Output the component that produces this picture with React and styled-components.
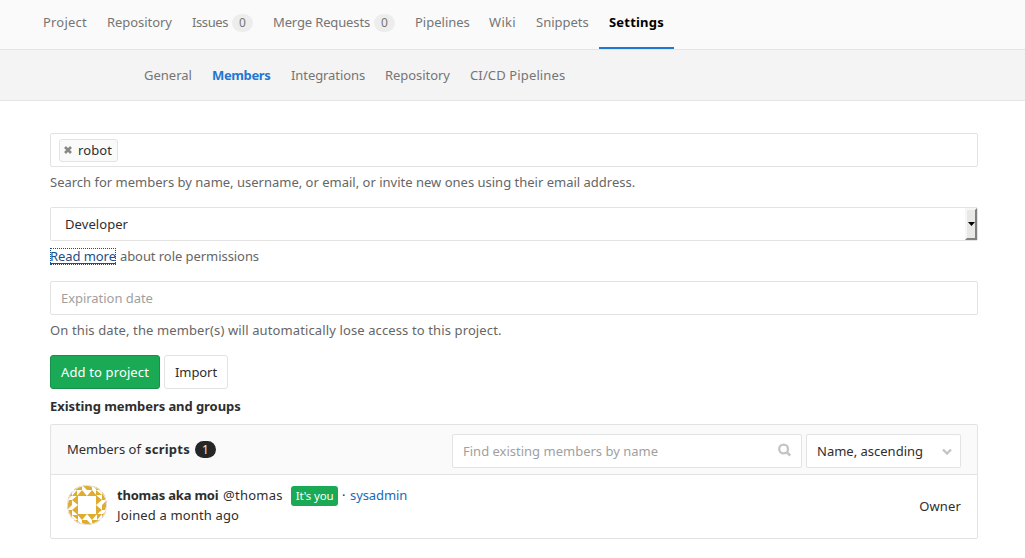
import React from 'react';
import styled, { createGlobalStyle } from 'styled-components';

const Global = createGlobalStyle`
  * { box-sizing: border-box; }
  body {
    margin: 0;
    background: #fff;
    color: #2e2e2e;
    font: 13px/20px "Noto Sans", sans-serif;
  }
`;

const T = styled.span`
  letter-spacing: ${(p) => p.$ls || 0}px;
  font-weight: ${(p) => (p.$bold ? 700 : 400)};
  white-space: nowrap;
`;

const TopNav = styled.nav`
  display: flex;
  height: 50px;
  padding-left: 33px;
  background: #fafafa;
  border-bottom: 1px solid #e5e5e5;
`;

const Tab = styled.a`
  display: flex;
  align-items: flex-start;
  width: ${(p) => p.$w}px;
  height: 49px;
  padding: 12px 0 0 10px;
  color: ${(p) => (p.$active ? '#000' : '#757575')};
  border-bottom: 2px solid ${(p) => (p.$active ? '#1f78d1' : 'transparent')};
`;

const Count = styled.span`
  width: 21px;
  height: 18px;
  margin: 2px 10px 0 auto;
  border-radius: 9px;
  background: #ededed;
  font-size: 12px;
  line-height: 18px;
  text-align: center;
`;

const SubNav = styled.nav`
  display: flex;
  height: 51px;
  padding: 15px 0 0 134px;
  background: #f4f4f4;
  border-bottom: 1px solid #e5e5e5;
`;

const SubTab = styled.a`
  width: ${(p) => p.$w}px;
  padding-left: 10px;
  color: ${(p) => (p.$active ? '#1f78d1' : '#757575')};
`;

const Page = styled.main`
  padding: 32px 47px 0 50px;
`;

const Field = styled.div`
  display: flex;
  align-items: center;
  height: 34px;
  padding-left: ${(p) => p.$pad}px;
  border: 1px solid #e3e3e3;
  border-radius: 2px;
  background: #fff;
  color: ${(p) => (p.$placeholder ? '#9f9f9f' : '#2e2e2e')};
`;

const Help = styled.p`
  margin: 5px 0 15px;
  color: #666;
`;

const Token = styled.span`
  display: flex;
  align-items: center;
  width: 59px;
  height: 23px;
  padding-left: 4px;
  gap: 6px;
  border: 1px solid #e3e3e3;
  border-radius: 3px;
  background: #fafafa;
`;

const SelectButton = styled.span`
  display: flex;
  align-items: center;
  justify-content: center;
  width: 12px;
  height: 32px;
  margin-left: auto;
  background: #e8e8e6;
  border: 2px solid;
  border-color: #f6f6f5 #808080 #808080 #f6f6f5;
`;

const ReadMore = styled.a`
  display: inline-block;
  height: 17px;
  line-height: 17px;
  margin-right: 4px;
  color: #1b4f8a;
  text-decoration: underline;
  text-underline-offset: 2px;
  outline: 1px dotted #1b4f8a;
  outline-offset: -1px;
`;

const Buttons = styled.div`
  display: flex;
  gap: 4px;
`;

const Button = styled.button`
  width: ${(p) => p.$w}px;
  height: 34px;
  padding: 0 0 0 10px;
  border: 1px solid ${(p) => (p.$primary ? '#168f48' : '#e3e3e3')};
  border-radius: 3px;
  background: ${(p) => (p.$primary ? '#1aaa55' : '#fff')};
  color: ${(p) => (p.$primary ? '#fff' : '#2e2e2e')};
  font: inherit;
  text-align: left;
`;

const Heading = styled.h5`
  margin: 7px 0 8px;
  font-size: 13px;
  line-height: 20px;
`;

const Panel = styled.section`
  border: 1px solid #e3e3e3;
  border-radius: 2px;
`;

const PanelHeader = styled.header`
  display: flex;
  gap: 4px;
  height: 50px;
  padding: 9px 16px 0;
  background: #fafafa;
  border-bottom: 1px solid #e3e3e3;
`;

const Title = styled.div`
  display: flex;
  gap: 4px;
  margin: 5px auto 0 0;
`;

const DarkCount = styled.span`
  width: 21px;
  height: 17px;
  margin: 2px 0 0 1px;
  border-radius: 9px;
  background: #262626;
  color: #e8e8e8;
  font-size: 12px;
  line-height: 17px;
  text-align: center;
`;

const Control = styled(Field)`
  justify-content: space-between;
  width: ${(p) => p.$w}px;
  padding-right: ${(p) => p.$right}px;
`;

const SearchIcon = styled.svg`
  margin-bottom: 3px;
`;

const Member = styled.div`
  display: flex;
  height: 63px;
  padding: 10px 16px;
`;

const Info = styled.div`
  margin: 0 auto 0 10px;
`;

const Line = styled.div`
  display: flex;
  height: 20px;
`;

const Handle = styled(T)`
  width: 68px;
  margin-left: 4.6px;
`;

const You = styled.span`
  width: 47px;
  height: 20px;
  margin: 1px 4px 0 0;
  border-radius: 3px;
  background: #1aaa55;
  color: #fff;
  font-size: 11.5px;
  line-height: 19px;
  letter-spacing: -0.15px;
  text-align: center;
`;

const Link = styled(T)`
  margin-left: 4.5px;
  color: #1b69b6;
`;

const Role = styled.div`
  margin-top: 11px;
`;

const tabs = [
  ['Project', 64, 0.2],
  ['Repository', 85, -0.05],
  ['Issues', 81, -0.4, 0],
  ['Merge Requests', 142, -0.14, 0],
  ['Pipelines', 74, 0],
  ['Wiki', 47, 0.3],
  ['Snippets', 73, 0],
  ['Settings', 75, 0.2],
];

const subTabs = [
  ['General', 68, 0],
  ['Members', 79, -0.36],
  ['Integrations', 94, -0.08],
  ['Repository', 85, -0.05],
  ['CI/CD Pipelines', 115, 0.13],
];

function Avatar() {
  const side = 'M0 0L5 2V5H0ZM5 0H10V5ZM0 11L5 5L10 11Z';
  const corner = 'M0 11L5 4V11ZM4 5L10 0V5ZM5 11L10 5V11Z';
  return (
    <svg width="40" height="40" viewBox="0 0 40 40">
      <defs>
        <clipPath id="round"><circle cx="20" cy="20" r="20" /></clipPath>
      </defs>
      <g clipPath="url(#round)" fill="#dfac2f">
        {[0, 90, 180, 270].map((a) => (
          <g key={a} transform={`rotate(${a} 20 20)`}>
            <path d={corner} />
            <path d={side} transform="translate(10 0)" />
            <path d={side} transform="translate(20 0)" />
          </g>
        ))}
      </g>
      <circle cx="20" cy="20" r="19.5" fill="none" stroke="#e3e3e3" />
    </svg>
  );
}

export default function App() {
  return (
    <>
      <Global />
      <TopNav>
        {tabs.map(([name, w, ls, count]) => (
          <Tab key={name} $w={w} $active={name === 'Settings'}>
            <T $ls={ls} $bold={name === 'Settings'}>{name}</T>
            {count !== undefined && <Count>{count}</Count>}
          </Tab>
        ))}
      </TopNav>
      <SubNav>
        {subTabs.map(([name, w, ls]) => (
          <SubTab key={name} $w={w} $active={name === 'Members'}>
            <T $ls={ls} $bold={name === 'Members'}>{name}</T>
          </SubTab>
        ))}
      </SubNav>
      <Page>
        <Field $pad={8}>
          <Token>
            <svg width="8" height="8" viewBox="0 0 8 8" stroke="#888" strokeWidth="2.6">
              <path d="M1 1L7 7M7 1L1 7" />
            </svg>
            <T $ls={0.1}>robot</T>
          </Token>
        </Field>
        <Help><T>Search for members by name, username, or email, or invite new ones using their email address.</T></Help>
        <Field $pad={14}>
          <T $ls={0.07}>Developer</T>
          <SelectButton>
            <svg width="7" height="4" viewBox="0 0 7 4"><path d="M0 0H7L3.5 4Z" /></svg>
          </SelectButton>
        </Field>
        <Help>
          <ReadMore><T $ls={-0.07}>Read more</T></ReadMore>
          <T $ls={-0.06}>about role permissions</T>
        </Help>
        <Field $pad={10} $placeholder><T $ls={-0.04}>Expiration date</T></Field>
        <Help><T $ls={0.118}>On this date, the member(s) will automatically lose access to this project.</T></Help>
        <Buttons>
          <Button $w={110} $primary><T $ls={0.13}>Add to project</T></Button>
          <Button $w={64}><T $ls={-0.08}>Import</T></Button>
        </Buttons>
        <Heading><T $bold $ls={-0.07}>Existing members and groups</T></Heading>
        <Panel>
          <PanelHeader>
            <Title>
              <T>Members of</T>
              <T $bold $ls={0.24}>scripts</T>
              <DarkCount>1</DarkCount>
            </Title>
            <Control $pad={10} $w={350} $right={10} $placeholder>
              <T>Find existing members by name</T>
              <SearchIcon width="13" height="14" viewBox="0 0 13 14" fill="none" stroke="#c4c4c4" strokeWidth="2.3">
                <circle cx="5.6" cy="6" r="4.4" />
                <path d="M8.8 9.2L12.2 12.6" strokeWidth="2.6" />
              </SearchIcon>
            </Control>
            <Control $pad={10} $w={155} $right={8}>
              <T>Name, ascending</T>
              <svg width="10" height="8" viewBox="0 0 10 8" fill="none" stroke="#c4c4c4" strokeWidth="2.4">
                <path d="M1 2.5L5 6.5L9 2.5" />
              </svg>
            </Control>
          </PanelHeader>
          <Member>
            <Avatar />
            <Info>
              <Line>
                <T $bold $ls={-0.2}>thomas aka moi</T>
                <Handle $ls={0.25}>@thomas</Handle>
                <You>It's you</You>
                <T>·</T>
                <Link $ls={-0.1}>sysadmin</Link>
              </Line>
              <Line><T $ls={0.14}>Joined a month ago</T></Line>
            </Info>
            <Role><T $ls={0.15}>Owner</T></Role>
          </Member>
        </Panel>
      </Page>
    </>
  );
}
